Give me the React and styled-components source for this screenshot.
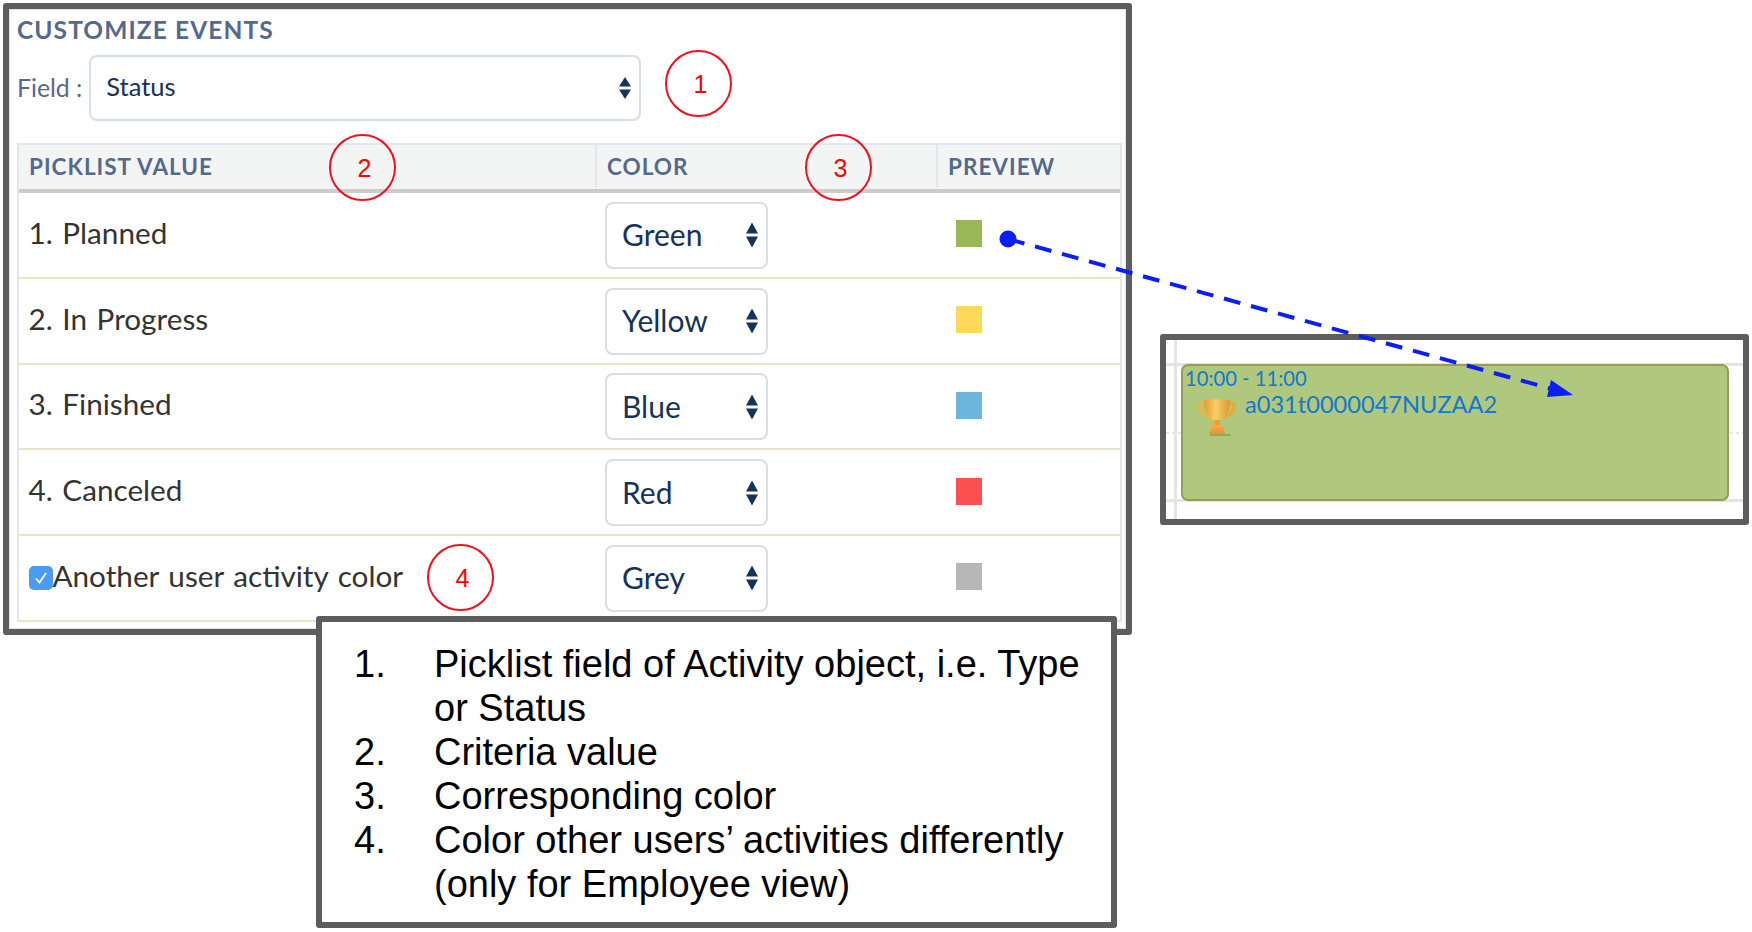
import React from 'react';
import styled, {createGlobalStyle} from 'styled-components';

const GlobalStyle = createGlobalStyle`
  html, body {
    margin: 0;
    padding: 0;
    background: #fff;
    overflow: hidden;
  }
  * {
    box-sizing: border-box;
  }
`;

const Page = styled.div`
  position: relative;
  width: 1752px;
  height: 932px;
  padding: 3px;
  display: flex;
  align-items: flex-start;
  font-family: "Lato", "Open Sans", sans-serif;
`;

const LeftColumn = styled.div`
  width: 1129px;
  flex: none;
`;

const Panel = styled.section`
  width: 1129px;
  height: 632px;
  border: 6px solid #5d5d5d;
  border-radius: 3px;
  padding: 0 4px 6px 8px;
  box-shadow: inset 0 0 0 1px #e3e6ec;
`;

const Title = styled.h2`
  margin: 0 0 5px 0;
  height: 41px;
  line-height: 41px;
  font-size: 24.5px;
  font-weight: 700;
  letter-spacing: 1.1px;
  color: #54698d;
`;

const FieldRow = styled.div`
  display: flex;
  align-items: center;
  gap: 7px;
  margin-bottom: 22px;
`;

const FieldLabel = styled.label`
  margin-top: -2px;
  font-size: 24.8px;
  color: #54698d;
`;

const SelectWrap = styled.div`
  position: relative;
  width: ${(p) => p.$width}px;
  height: ${(p) => p.$height}px;
  margin-top: ${(p) => p.$top}px;

  > select {
    appearance: none;
    width: 100%;
    height: 100%;
    padding: 0 0 ${(p) => p.$lift}px 15px;
    border: 2px solid #d8dde6;
    border-radius: 8px;
    background: #fff;
    color: #16325c;
    font-family: inherit;
    font-size: ${(p) => p.$size}px;
    outline: none;
  }

  > svg {
    position: absolute;
    top: 50%;
    right: ${(p) => p.$arrowRight}px;
    transform: translateY(-50%);
    pointer-events: none;
  }
`;

const Table = styled.div`
  width: 1105px;
  border-left: 2px solid #e3e6ec;
  border-right: 2px solid #e3e6ec;
`;

const HeadRow = styled.div`
  display: grid;
  grid-template-columns: 576px 341px 1fr;
  height: 50px;
  padding-bottom: 2px;
  background: #f3f5f5;
  border-top: 2px solid #e3e6ec;
  border-bottom: 4px solid #cccccc;
`;

const HeadCell = styled.div`
  display: flex;
  align-items: center;
  padding-left: ${(p) => p.$pad}px;
  font-size: 22.5px;
  font-weight: 700;
  letter-spacing: 1px;
  color: #54698d;
  border-left: ${(p) => (p.$first ? 'none' : '2px solid #e3e6ec')};
`;

const Row = styled.div`
  display: grid;
  grid-template-columns: 576px 341px 1fr;
  align-items: center;
  height: 85.75px;
  border-bottom: 2px solid #e9e4c6;
`;

const NameCell = styled.div`
  display: flex;
  align-items: center;
  padding-left: 9.5px;
  padding-bottom: 5px;
  font-size: 29.7px;
  word-spacing: 2px;
  color: #333;
`;

const ColorCell = styled.div`
  padding-left: 10px;
`;

const PreviewCell = styled.div`
  padding-left: 20px;
  padding-bottom: 2px;
`;

const Swatch = styled.div`
  width: 26px;
  height: 27px;
  background: ${(p) => p.$color};
`;

const CheckBox = styled.span`
  display: inline-flex;
  align-items: center;
  justify-content: center;
  width: 24px;
  height: 24px;
  margin-top: 5px;
  border-radius: 5px;
  background: #4a9cf2;
  flex: none;
`;

const NoteBox = styled.div`
  position: relative;
  z-index: 2;
  width: 801px;
  height: 312px;
  margin: -19px 0 0 313px;
  padding: 20px 0 0 32px;
  border: 6px solid #5d5d5d;
  border-radius: 3px;
  background: #fff;
`;

const NoteList = styled.ol`
  margin: 0;
  padding: 0;
  list-style: none;
  font-family: "Liberation Sans", Arial, sans-serif;
  font-size: 38px;
  line-height: 44px;
  color: #000;
`;

const NoteItem = styled.li`
  display: grid;
  grid-template-columns: 80px 676px;
`;

const EventPanel = styled.div`
  flex: none;
  width: 589px;
  height: 191px;
  margin: 331px 0 0 28px;
  padding: 24px 14px 0 15px;
  border: 6px solid #5d5d5d;
  border-radius: 3px;
  background:
    linear-gradient(#e4e4e4, #e4e4e4) 8px 0 / 3px 100% no-repeat,
    linear-gradient(#e4e4e4, #e4e4e4) 0 23px / 100% 3px no-repeat,
    linear-gradient(#e4e4e4, #e4e4e4) 0 159px / 100% 3px no-repeat,
    repeating-linear-gradient(90deg, #e4e4e4 0 3px, #fff 3px 6px) 0 92px / 100% 2px no-repeat,
    #fff;
`;

const EventCard = styled.div`
  position: relative;
  height: 137px;
  padding: 1px 0 0 2px;
  border: 2px solid #98995a;
  border-radius: 7px;
  background: #b0c77e;
  color: #1279cf;
`;

const EventTime = styled.div`
  font-size: 20.2px;
  line-height: 22px;
`;

const EventBody = styled.div`
  display: flex;
  align-items: flex-start;
  margin: 0 0 0 13px;
`;

const EventName = styled.div`
  margin: 1px 0 0 9px;
  font-size: 23.6px;
  line-height: 28px;
`;

const TrophyIcon = styled.svg`
  margin-top: 10px;
  flex: none;
`;

const Callout = styled.div`
  position: absolute;
  left: ${(p) => p.$x}px;
  top: ${(p) => p.$y}px;
  width: 67px;
  height: 67px;
  display: flex;
  align-items: center;
  justify-content: center;
  padding: 1px 0 0 4px;
  border: 2px solid #f0101e;
  border-radius: 50%;
  font-family: "Liberation Sans", Arial, sans-serif;
  font-size: 25px;
  color: #f00;
`;

const ArrowOverlay = styled.svg`
  position: absolute;
  left: 0;
  top: 0;
  z-index: 3;
  pointer-events: none;
`;

const UpDown = ({height}) => (
  <svg width="12" height={height} viewBox={`0 0 12 ${height}`}>
    <polygon points={`6,0 12,${height / 2 - 1.5} 0,${height / 2 - 1.5}`} fill="#16325c"/>
    <polygon points={`0,${height / 2 + 1.5} 12,${height / 2 + 1.5} 6,${height}`} fill="#16325c"/>
  </svg>
);

const Trophy = () => (
  <TrophyIcon width="38" height="38" viewBox="0 0 38 38">
    <defs>
      <linearGradient id="cup" x1="0" x2="1" y1="0" y2="0">
        <stop offset="0" stopColor="#e59b2b"/>
        <stop offset="0.45" stopColor="#f6cf68"/>
        <stop offset="1" stopColor="#e2952a"/>
      </linearGradient>
      <linearGradient id="foot" x1="0" x2="0" y1="0" y2="1">
        <stop offset="0" stopColor="#f4b04e"/>
        <stop offset="1" stopColor="#f08f2a"/>
      </linearGradient>
    </defs>
    <path d="M8 4C3 3 1 5 2 9c1 4 4 7 9 9" fill="none" stroke="#e9b648" strokeWidth="3.5"/>
    <path d="M30 4c5-1 7 1 6 5-1 4-4 7-9 9" fill="none" stroke="#e4ab3c" strokeWidth="3.5"/>
    <path d="M6 1c8-1 18-1 26 0 0 10-3 18-10 21h-6C9 19 6 11 6 1z" fill="url(#cup)"/>
    <rect x="16" y="21" width="6" height="6" fill="#e8a034"/>
    <path d="M13 26h12l2 9H11z" fill="url(#foot)"/>
    <rect x="12" y="35" width="21" height="2" rx="1" fill="#6f7f4c" opacity="0.45"/>
  </TrophyIcon>
);

const picklist = [
  {name: '1. Planned', color: 'Green', swatch: '#99b855'},
  {name: '2. In Progress', color: 'Yellow', swatch: '#fed858'},
  {name: '3. Finished', color: 'Blue', swatch: '#6cb6dd'},
  {name: '4. Canceled', color: 'Red', swatch: '#fb5050'},
];

const colors = ['Green', 'Yellow', 'Blue', 'Red', 'Grey'];

const notes = [
  ['1.', 'Picklist field of Activity object, i.e. Type or Status'],
  ['2.', 'Criteria value'],
  ['3.', 'Corresponding color'],
  ['4.', 'Color other users’ activities differently (only for Employee view)'],
];

const ColorSelect = ({value}) => (
  <SelectWrap $width={163} $height={67} $size={30} $arrowRight={10} $top={1} $lift={2}>
    <select defaultValue={value}>
      {colors.map((c) => <option key={c}>{c}</option>)}
    </select>
    <UpDown height={25}/>
  </SelectWrap>
);

export default function App() {
  return (
    <Page>
      <GlobalStyle/>
      <LeftColumn>
        <Panel>
          <Title>CUSTOMIZE EVENTS</Title>
          <FieldRow>
            <FieldLabel>Field :</FieldLabel>
            <SelectWrap $width={552} $height={66} $size={25.5} $arrowRight={10} $top={0} $lift={4}>
              <select defaultValue="Status">
                <option>Status</option>
                <option>Type</option>
              </select>
              <UpDown height={22}/>
            </SelectWrap>
          </FieldRow>
          <Table>
            <HeadRow>
              <HeadCell $first $pad={10}>PICKLIST VALUE</HeadCell>
              <HeadCell $pad={10}>COLOR</HeadCell>
              <HeadCell $pad={10}>PREVIEW</HeadCell>
            </HeadRow>
            {picklist.map((row) => (
              <Row key={row.name}>
                <NameCell>{row.name}</NameCell>
                <ColorCell><ColorSelect value={row.color}/></ColorCell>
                <PreviewCell><Swatch $color={row.swatch}/></PreviewCell>
              </Row>
            ))}
            <Row>
              <NameCell>
                <CheckBox>
                  <svg width="16" height="16" viewBox="0 0 16 16">
                    <path d="M3 8.5l3.5 4L13 3" fill="none" stroke="#fff" strokeWidth="1.8"/>
                  </svg>
                </CheckBox>
                Another user activity color
              </NameCell>
              <ColorCell><ColorSelect value="Grey"/></ColorCell>
              <PreviewCell><Swatch $color="#b7b7b7"/></PreviewCell>
            </Row>
          </Table>
        </Panel>
        <NoteBox>
          <NoteList>
            {notes.map(([num, text]) => (
              <NoteItem key={num}>
                <span>{num}</span>
                <span>{text}</span>
              </NoteItem>
            ))}
          </NoteList>
        </NoteBox>
      </LeftColumn>

      <EventPanel>
        <EventCard>
          <EventTime>10:00 - 11:00</EventTime>
          <EventBody>
            <Trophy/>
            <EventName>a031t0000047NUZAA2</EventName>
          </EventBody>
        </EventCard>
      </EventPanel>

      <Callout $x={665} $y={50}>1</Callout>
      <Callout $x={329} $y={134}>2</Callout>
      <Callout $x={805} $y={134}>3</Callout>
      <Callout $x={427} $y={544}>4</Callout>

      <ArrowOverlay width="1752" height="932" viewBox="0 0 1752 932">
        <circle cx="1008" cy="239" r="8.5" fill="#0a1ef5"/>
        <line x1="1008" y1="239" x2="1552" y2="389" stroke="#0a1ef5" strokeWidth="4" strokeDasharray="17 11"/>
        <polygon points="1573,395 1551,380 1547,397" fill="#0a1ef5"/>
      </ArrowOverlay>
    </Page>
  );
}
